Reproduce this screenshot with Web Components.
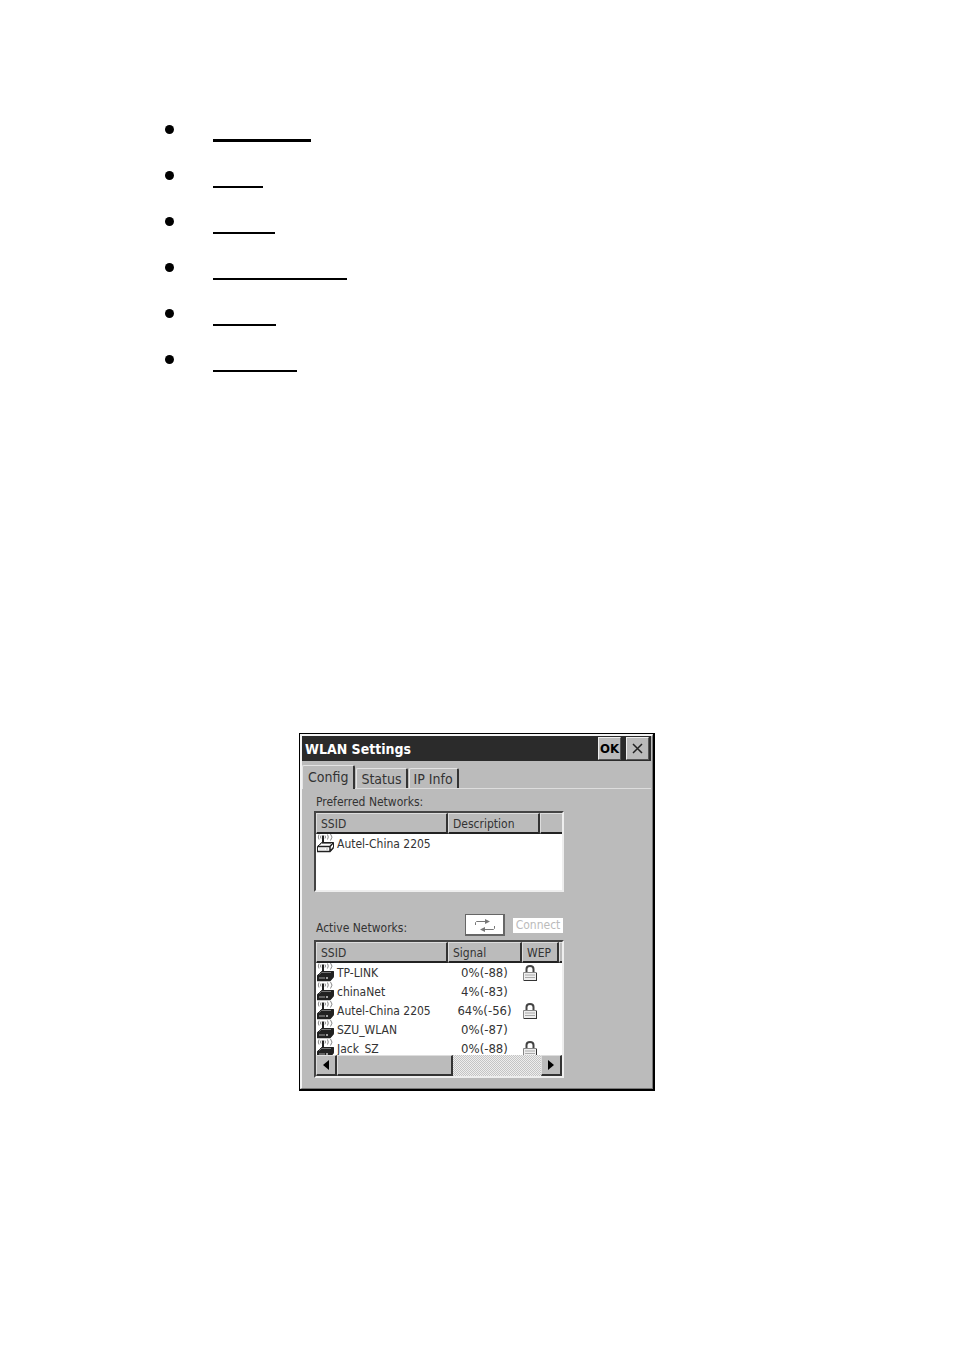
<!DOCTYPE html>
<html lang="en">
<head>
<meta charset="utf-8">
<meta name="viewport" content="width=device-width, initial-scale=1">
<title>WLAN Settings</title>
<style>
    body {
        margin: 0;
        background: #fff;
        color: #333;
        font: 12px/18px "DejaVu Sans Condensed", "DejaVu Sans", sans-serif;
    }

    main {
        padding: 106px 16px 64px;
    }
</style>
</head>
<body>
<main>
    <bullet-list>
        <bullet-item style="--rule: 98px; --weight: 3px"></bullet-item>
        <bullet-item style="--rule: 50px"></bullet-item>
        <bullet-item style="--rule: 62px"></bullet-item>
        <bullet-item style="--rule: 134px"></bullet-item>
        <bullet-item style="--rule: 63px"></bullet-item>
        <bullet-item style="--rule: 84px"></bullet-item>
    </bullet-list>

    <settings-window>
        <span slot="title">WLAN Settings</span>
        <tab-button slot="tabs" selected>Config</tab-button>
        <tab-button slot="tabs">Status</tab-button>
        <tab-button slot="tabs">IP Info</tab-button>

        <network-group list="preferred">Preferred Networks:</network-group>
        <network-group list="active">
            Active Networks:
            <refresh-button slot="actions"></refresh-button>
            <connect-button slot="actions">Connect</connect-button>
        </network-group>
    </settings-window>
</main>

<script>
    const LISTS = {
        preferred: {
            columns: [['SSID', 132], ['Description', 92], ['', 22]],
            rows: [['Autel-China 2205', '', false]],
            icon: '#fff',
            scroll: false
        },
        active: {
            columns: [['SSID', 132], ['Signal', 74], ['WEP', 37], ['', 3]],
            rows: [
                ['TP-LINK', '0%(-88)', true],
                ['chinaNet', '4%(-83)', false],
                ['Autel-China 2205', '64%(-56)', true],
                ['SZU_WLAN', '0%(-87)', false],
                ['Jack_SZ', '0%(-88)', true]
            ],
            icon: '#222',
            scroll: true
        }
    };

    class BulletList extends HTMLElement {
        connectedCallback() {
            this.setAttribute('role', 'list');
            this.attachShadow({ mode: 'open' }).innerHTML = `
                <style>
                    :host {
                        display: flex;
                        flex-direction: column;
                        padding-left: 149px;
                    }
                </style>
                <slot></slot>
            `;
        }
    }

    class BulletItem extends HTMLElement {
        connectedCallback() {
            this.setAttribute('role', 'listitem');
            this.attachShadow({ mode: 'open' }).innerHTML = `
                <style>
                    :host {
                        display: flex;
                        gap: 39px;
                        height: 46px;
                    }

                    .dot {
                        width: 9px;
                        height: 9px;
                        margin-top: 19px;
                        border-radius: 50%;
                        background: #000;
                    }

                    .rule {
                        box-sizing: border-box;
                        width: var(--rule);
                        height: 36px;
                        border-bottom: var(--weight, 2px) solid #000;
                    }
                </style>
                <span class="dot"></span>
                <span class="rule"></span>
            `;
        }
    }

    class SettingsWindow extends HTMLElement {
        connectedCallback() {
            this.attachShadow({ mode: 'open' }).innerHTML = `
                <style>
                    :host {
                        display: block;
                        box-sizing: border-box;
                        max-width: 356px;
                        margin: 351px auto 0;
                        border: solid #000;
                        border-width: 1px 2px 2px 1px;
                        background: #bbb;
                    }

                    .frame {
                        border: solid;
                        border-width: 2px 1px 1px 2px;
                        border-color: #f4f4f4 #777 #777 #f4f4f4;
                        padding-right: 1px;
                    }

                    header {
                        display: flex;
                        align-items: center;
                        gap: 5px;
                        height: 25px;
                        padding: 0 2px 0 3px;
                        background: #2b2b2b;
                        color: #fff;
                    }

                    h1 {
                        flex: 1;
                        margin: 0;
                        font-size: 14px;
                        font-weight: bold;
                    }

                    header button {
                        width: 23px;
                        height: 23px;
                        padding: 0;
                        border: 1px solid;
                        border-color: #eee #555 #555 #eee;
                        background: #bbb;
                        color: #000;
                        font: bold 13px/20px "DejaVu Sans Condensed", "DejaVu Sans", sans-serif;
                    }

                    header svg {
                        display: block;
                        margin: auto;
                    }

                    nav {
                        display: flex;
                        align-items: flex-end;
                        gap: 1px;
                        height: 27px;
                        border-bottom: 1px solid #ddd;
                    }

                    .panel {
                        padding: 4px 87px 10px 12px;
                    }
                </style>
                <div class="frame">
                    <header>
                        <h1><slot name="title"></slot></h1>
                        <button type="button">OK</button>
                        <button type="button" aria-label="Close">
                            <svg width="11" height="11" viewBox="0 0 11 11"><path d="M1 1l9 9M10 1l-9 9" stroke="#222" stroke-width="1.5"/></svg>
                        </button>
                    </header>
                    <nav><slot name="tabs"></slot></nav>
                    <div class="panel"><slot></slot></div>
                </div>
            `;
        }
    }

    class TabButton extends HTMLElement {
        connectedCallback() {
            this.attachShadow({ mode: 'open' }).innerHTML = `
                <style>
                    :host {
                        display: block;
                        height: 20px;
                    }

                    :host([selected]) {
                        height: 24px;
                        margin-bottom: -1px;
                    }

                    button {
                        display: block;
                        box-sizing: border-box;
                        height: 100%;
                        padding: 1px 4px 0;
                        border: solid;
                        border-width: 1px 2px 0 1px;
                        border-color: #e4e4e4 #333 #333 #e4e4e4;
                        border-radius: 2px 2px 0 0;
                        background: #bbb;
                        color: inherit;
                        font: inherit;
                        font-size: 14px;
                    }

                    :host([selected]) button {
                        padding: 0 5px 2px;
                    }
                </style>
                <button type="button"><slot></slot></button>
            `;
        }
    }

    class NetworkGroup extends HTMLElement {
        connectedCallback() {
            const name = this.getAttribute('list');
            this.attachShadow({ mode: 'open' }).innerHTML = `
                <style>
                    :host {
                        display: block;
                    }

                    .caption {
                        display: flex;
                        align-items: center;
                        gap: 8px;
                        height: 18px;
                        padding: 0 1px 0 2px;
                    }

                    :host([list="active"]) .caption {
                        height: 22px;
                        margin: 22px 0 4px;
                    }

                    .label {
                        flex: 1;
                    }

                    :host([list="active"]) .label {
                        padding-top: 6px;
                    }
                </style>
                <div class="caption">
                    <span class="label"><slot></slot></span>
                    <slot name="actions"></slot>
                </div>
                <network-list list="${name}"></network-list>
            `;
        }
    }

    class RefreshButton extends HTMLElement {
        connectedCallback() {
            this.attachShadow({ mode: 'open' }).innerHTML = `
                <style>
                    :host {
                        display: block;
                    }

                    button {
                        display: flex;
                        align-items: center;
                        justify-content: center;
                        width: 40px;
                        height: 22px;
                        padding: 0;
                        border: solid #666;
                        border-width: 1px 2px 2px 1px;
                        background: #fff;
                    }
                </style>
                <button type="button" aria-label="Refresh">
                    <svg width="22" height="16" viewBox="0 0 22 16" fill="none" stroke="#777">
                        <path d="M1.500 8V5.500L2.500 4.500H12M20.500 9V11.500L19.500 12.500H10"/>
                        <path d="M11 2l5 2.500-5 2.500zM11 10l-5 2.500 5 2.500z" fill="#777" stroke="none"/>
                    </svg>
                </button>
            `;
        }
    }

    class ConnectButton extends HTMLElement {
        connectedCallback() {
            this.attachShadow({ mode: 'open' }).innerHTML = `
                <style>
                    :host {
                        display: block;
                    }

                    button {
                        display: block;
                        width: 50px;
                        padding: 0;
                        border: 0;
                        background: #fff;
                        color: #bbb;
                        font: inherit;
                        line-height: 15px;
                    }
                </style>
                <button type="button" disabled><slot></slot></button>
            `;
        }
    }

    class NetworkList extends HTMLElement {
        connectedCallback() {
            const { columns, rows, icon, scroll } = LISTS[this.getAttribute('list')];
            const cols = columns.map(([, width]) => `<col style="width: ${width}px">`).join('');
            const head = columns.map(([text]) => `<th scope="col">${text}</th>`).join('');
            const body = rows.map(([ssid, signal, locked]) => `
                <tr>
                    <td><span class="ssid"><router-icon style="--body: ${icon}"></router-icon>${ssid}</span></td>
                    <td class="signal">${signal}</td>
                    <td>${locked ? '<lock-icon></lock-icon>' : ''}</td>
                </tr>
            `).join('');

            this.attachShadow({ mode: 'open' }).innerHTML = `
                <style>
                    :host {
                        display: block;
                        border: 2px solid;
                        border-color: #444 #eee #eee #444;
                        background: #fff;
                    }

                    .view {
                        height: 77px;
                        overflow: hidden;
                    }

                    .view.scroll {
                        height: 113px;
                    }

                    table {
                        width: 100%;
                        table-layout: fixed;
                        border-collapse: separate;
                        border-spacing: 0;
                    }

                    th {
                        box-sizing: border-box;
                        height: 21px;
                        padding: 2px 0 0 4px;
                        border: solid;
                        border-width: 1px 2px 2px 1px;
                        border-color: #ddd #333 #222 #ddd;
                        background: #bbb;
                        font-weight: normal;
                        line-height: 16px;
                        text-align: left;
                    }

                    th:last-child {
                        padding: 0;
                        border-right: 0;
                    }

                    td {
                        height: 19px;
                        padding: 0;
                        line-height: 20px;
                        vertical-align: top;
                        white-space: nowrap;
                    }

                    .ssid {
                        display: flex;
                        gap: 3px;
                        height: 19px;
                        padding-left: 1px;
                    }

                    .signal {
                        display: block;
                        padding-right: 1px;
                        font-size: 13px;
                        text-align: center;
                    }
                </style>
                <div class="view ${scroll ? 'scroll' : ''}">
                    <table>
                        <colgroup>${cols}</colgroup>
                        <thead><tr>${head}</tr></thead>
                        <tbody>${body}</tbody>
                    </table>
                </div>
                ${scroll ? '<scroll-strip></scroll-strip>' : ''}
            `;
        }
    }

    class RouterIcon extends HTMLElement {
        connectedCallback() {
            this.attachShadow({ mode: 'open' }).innerHTML = `
                <style>
                    :host {
                        display: block;
                    }

                    svg {
                        display: block;
                    }
                </style>
                <svg width="17" height="19" viewBox="0 0 17 19" fill="none" stroke="#222">
                    <path d="M2 .5q-1.500 2.500 0 5M4 1.500q-1 1.500 0 3M8 1.500q1 1.500 0 3M10.500 .5q1.500 2.500 0 5M13.500 0q3 3 0 6.500" stroke="#888"/>
                    <path d="M6 1.500v10" stroke-width="2"/>
                    <path d="M.500 12.500L4.500 8.500H16.500V13.500L13 17.500H.500Z" style="fill: var(--body)"/>
                    <path d="M.500 12.500H13V17.500M13 12.500L16.500 8.500M0 17.500H13L16.500 13.500" stroke-width="1.500"/>
                    <path d="M2 11.500L4.500 9.500H14" stroke="#777"/>
                    <path d="M2.500 15h1m1 0h1m1 0h1M9 15h2" stroke="#ccc" stroke-width="1.500"/>
                </svg>
            `;
        }
    }

    class LockIcon extends HTMLElement {
        connectedCallback() {
            this.attachShadow({ mode: 'open' }).innerHTML = `
                <style>
                    :host {
                        display: block;
                        padding: 2px 0 0 1px;
                    }

                    svg {
                        display: block;
                    }
                </style>
                <svg width="14" height="16" viewBox="0 0 14 16" fill="none">
                    <path d="M3.500 7V4Q3.500 1 7 1T10.500 4V7" stroke="#444" stroke-width="2"/>
                    <path d="M.500 7.500h13v8H.500z" fill="#eee" stroke="#888"/>
                    <path d="M2 10h10M2 12.500h10" stroke="#aaa"/>
                    <path d="M1 15.500h13M13.500 8v8" stroke="#333"/>
                </svg>
            `;
        }
    }

    class ScrollStrip extends HTMLElement {
        connectedCallback() {
            this.attachShadow({ mode: 'open' }).innerHTML = `
                <style>
                    :host {
                        display: flex;
                        height: 21px;
                        background: repeating-conic-gradient(#c4c4c4 0 25%, #eee 0 50%) 0 0 / 2px 2px;
                    }

                    button,
                    .thumb {
                        box-sizing: border-box;
                        border: solid;
                        border-width: 1px 2px 2px 1px;
                        border-color: #ddd #333 #333 #ddd;
                        background: #bbb;
                    }

                    button {
                        display: flex;
                        align-items: center;
                        justify-content: center;
                        width: 21px;
                        padding: 0;
                    }

                    .track {
                        flex: 1;
                    }

                    .thumb {
                        width: 57%;
                        height: 100%;
                    }
                </style>
                <button type="button" aria-label="Scroll left">
                    <svg width="6" height="10" viewBox="0 0 6 10"><path d="M6 0v10L0 5z" fill="#000"/></svg>
                </button>
                <div class="track"><div class="thumb"></div></div>
                <button type="button" aria-label="Scroll right">
                    <svg width="6" height="10" viewBox="0 0 6 10"><path d="M0 0v10l6-5z" fill="#000"/></svg>
                </button>
            `;
        }
    }

    customElements.define('bullet-list', BulletList);
    customElements.define('bullet-item', BulletItem);
    customElements.define('settings-window', SettingsWindow);
    customElements.define('tab-button', TabButton);
    customElements.define('network-group', NetworkGroup);
    customElements.define('refresh-button', RefreshButton);
    customElements.define('connect-button', ConnectButton);
    customElements.define('network-list', NetworkList);
    customElements.define('router-icon', RouterIcon);
    customElements.define('lock-icon', LockIcon);
    customElements.define('scroll-strip', ScrollStrip);
</script>
</body>
</html>
